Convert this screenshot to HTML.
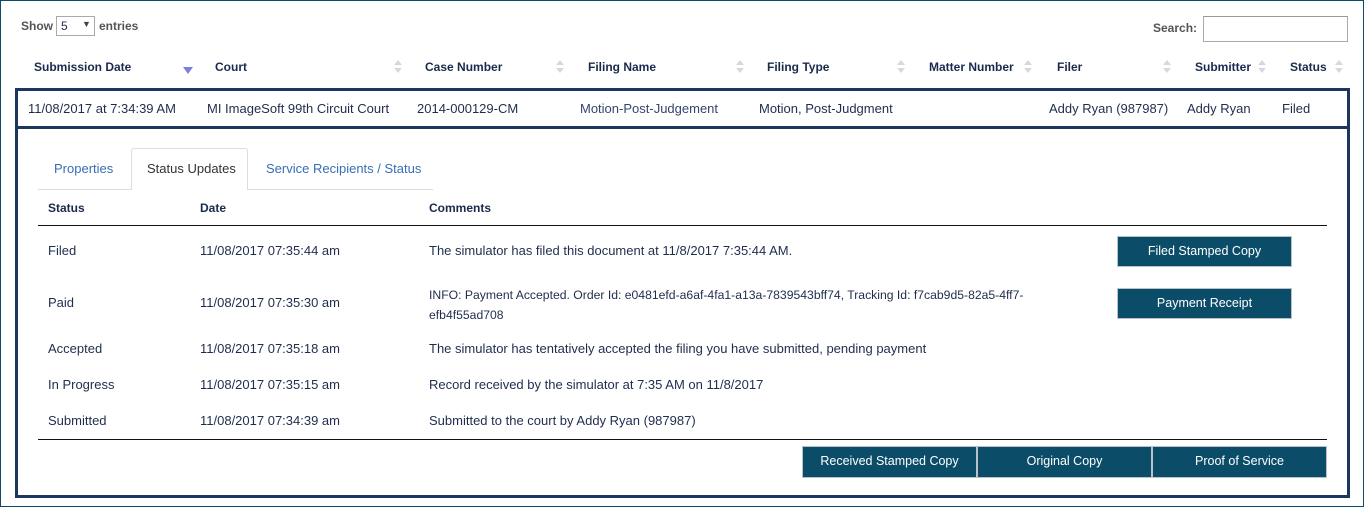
<!DOCTYPE html><html><head><style>
*{margin:0;padding:0;box-sizing:border-box}
body{width:1364px;height:507px;background:#fff;font-family:"Liberation Sans",sans-serif;font-size:13px;color:#1f2d4d;position:relative;overflow:hidden}
.a{position:absolute;white-space:nowrap}
.b{font-weight:bold;color:#1b2a4c;font-size:12px}
.s{position:absolute;width:8px;height:14px}
.s:before{content:"";position:absolute;left:0;top:0;border-left:4px solid transparent;border-right:4px solid transparent;border-bottom:5px solid #d5d8dc}
.s:after{content:"";position:absolute;left:0;top:8px;border-left:4px solid transparent;border-right:4px solid transparent;border-top:5px solid #d5d8dc}
.btn{position:absolute;background:#0b4d69;color:#fff;text-align:center;border:1px solid #b8c2c8;font-size:12.5px;line-height:28px}
</style></head><body>
<div class="a" style="left:0;top:0;width:1364px;height:507px;border:1px solid #0d4a66"></div>
<div class="a b" style="left:21px;top:19px;color:#555">Show</div>
<div class="a" style="left:56px;top:16px;width:39px;height:20px;border:1px solid #aaa;font-size:12px"><span class="a" style="left:4px;top:2px">5</span><span class="a" style="left:25px;top:2px;font-size:9px;color:#444">▼</span></div>
<div class="a b" style="left:99px;top:19px;color:#555">entries</div>
<div class="a b" style="left:1153px;top:21px;color:#555">Search:</div>
<div class="a" style="left:1203px;top:16px;width:145px;height:26px;border:1px solid #aaa;border-top-color:#999"></div>
<div class="a b" style="left:34px;top:60px">Submission Date</div>
<div class="a" style="left:183px;top:67px;border-left:5px solid transparent;border-right:5px solid transparent;border-top:7px solid #7b7fe0"></div>
<div class="a b" style="left:215px;top:60px">Court</div><div class="s" style="left:394px;top:60px"></div>
<div class="a b" style="left:425px;top:60px">Case Number</div><div class="s" style="left:556px;top:60px"></div>
<div class="a b" style="left:588px;top:60px">Filing Name</div><div class="s" style="left:736px;top:60px"></div>
<div class="a b" style="left:767px;top:60px">Filing Type</div><div class="s" style="left:897px;top:60px"></div>
<div class="a b" style="left:929px;top:60px">Matter Number</div><div class="s" style="left:1024px;top:60px"></div>
<div class="a b" style="left:1057px;top:60px">Filer</div><div class="s" style="left:1163px;top:60px"></div>
<div class="a b" style="left:1195px;top:60px">Submitter</div><div class="s" style="left:1258px;top:60px"></div>
<div class="a b" style="left:1290px;top:60px">Status</div><div class="s" style="left:1335px;top:60px"></div>
<div class="a" style="left:15px;top:88px;width:1335px;height:410px;border:3px solid #1c365c"></div>
<div class="a" style="left:15px;top:126px;width:1335px;height:3px;background:#1c365c"></div>
<div class="a" style="left:28px;top:101px">11/08/2017 at 7:34:39 AM</div>
<div class="a" style="left:207px;top:101px">MI ImageSoft 99th Circuit Court</div>
<div class="a" style="left:417px;top:101px">2014-000129-CM</div>
<div class="a" style="left:580px;top:101px;color:#34456e">Motion-Post-Judgement</div>
<div class="a" style="left:759px;top:101px">Motion, Post-Judgment</div>
<div class="a" style="left:1049px;top:101px">Addy Ryan (987987)</div>
<div class="a" style="left:1187px;top:101px">Addy Ryan</div>
<div class="a" style="left:1282px;top:101px">Filed</div>
<div class="a" style="left:38px;top:189px;width:395px;height:1px;background:#ddd"></div>
<div class="a" style="left:131px;top:148px;width:117px;height:42px;border:1px solid #ddd;border-bottom:none;background:#fff;border-radius:3px 3px 0 0"></div>
<div class="a" style="left:54px;top:161px;color:#3a6db5">Properties</div>
<div class="a" style="left:147px;top:161px;color:#333">Status Updates</div>
<div class="a" style="left:266px;top:161px;color:#3a6db5">Service Recipients / Status</div>
<div class="a b" style="left:48px;top:201px">Status</div>
<div class="a b" style="left:200px;top:201px">Date</div>
<div class="a b" style="left:429px;top:201px">Comments</div>
<div class="a" style="left:38px;top:225px;width:1289px;height:1px;background:#111"></div>
<div class="a" style="left:48px;top:243px">Filed</div><div class="a" style="left:200px;top:243px">11/08/2017 07:35:44 am</div><div class="a" style="left:429px;top:243px">The simulator has filed this document at 11/8/2017 7:35:44 AM.</div>
<div class="btn" style="left:1117px;top:236px;width:175px;height:31px">Filed Stamped Copy</div>
<div class="a" style="left:48px;top:295px">Paid</div><div class="a" style="left:200px;top:295px">11/08/2017 07:35:30 am</div><div class="a" style="left:429px;top:285px;line-height:20px;font-size:12.2px">INFO: Payment Accepted. Order Id: e0481efd-a6af-4fa1-a13a-7839543bff74, Tracking Id: f7cab9d5-82a5-4ff7-<br>efb4f55ad708</div>
<div class="btn" style="left:1117px;top:288px;width:175px;height:31px">Payment Receipt</div>
<div class="a" style="left:48px;top:341px">Accepted</div><div class="a" style="left:200px;top:341px">11/08/2017 07:35:18 am</div><div class="a" style="left:429px;top:341px">The simulator has tentatively accepted the filing you have submitted, pending payment</div>
<div class="a" style="left:48px;top:377px">In Progress</div><div class="a" style="left:200px;top:377px">11/08/2017 07:35:15 am</div><div class="a" style="left:429px;top:377px">Record received by the simulator at 7:35 AM on 11/8/2017</div>
<div class="a" style="left:48px;top:413px">Submitted</div><div class="a" style="left:200px;top:413px">11/08/2017 07:34:39 am</div><div class="a" style="left:429px;top:413px">Submitted to the court by Addy Ryan (987987)</div>
<div class="a" style="left:38px;top:439px;width:1289px;height:1px;background:#111"></div>
<div class="btn" style="left:802px;top:446px;width:175px;height:32px">Received Stamped Copy</div>
<div class="btn" style="left:977px;top:446px;width:175px;height:32px">Original Copy</div>
<div class="btn" style="left:1152px;top:446px;width:175px;height:32px">Proof of Service</div>
</body></html>
